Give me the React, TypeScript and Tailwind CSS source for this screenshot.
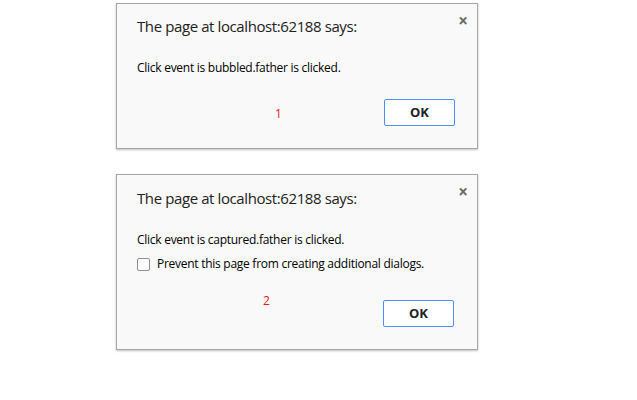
import React from 'react';

const font = { fontFamily: '"Segoe UI", "Open Sans", "Noto Sans", sans-serif' };

const Dialog = ({
  message,
  mark,
  withCheckbox,
}: {
  message: string;
  mark: string;
  withCheckbox?: boolean;
}) => {
  return (
    <div className="relative w-[362px] border border-[#a6a6a6] bg-[#f9f9f9] shadow-[0_1px_2px_rgba(0,0,0,0.25)]">
      <button className="absolute right-[9px] top-[8px] text-[17px] leading-none font-bold text-[#6b6b6b]">×</button>
      <div className={`pl-[20px] pr-[20px] pb-[22px] ${withCheckbox ? 'pt-[12px]' : 'pt-[11px]'}`}>
        <div className="text-[15px] leading-[22px] tracking-[-0.4px] text-[#222]">The page at localhost:62188 says:</div>
        <div className="mt-[23px] text-[12px] leading-[16px] tracking-[-0.27px] text-black">{message}</div>
        {withCheckbox && (
          <label className="mt-[8px] flex items-center gap-[7px] text-[12px] leading-[16px] tracking-[-0.27px] text-black">
            <span className="h-[13px] w-[13px] rounded-[2px] border border-[#8f8f8f] bg-white" />
            Prevent this page from creating additional dialogs.
          </label>
        )}
        <div className={`relative flex justify-end ${withCheckbox ? 'mt-[28px]' : 'mt-[23px]'}`}>
          <span className="absolute text-[12px] leading-none text-[#e02020]" style={{ left: mark === '1' ? 138 : 126, top: mark === '1' ? 9 : -5 }}>
            {mark}
          </span>
          <button className={`h-[27px] w-[71px] rounded-[2px] border border-[#4d90fe] bg-white text-[13px] font-bold text-[#222] ${withCheckbox ? 'mr-[3px]' : 'mr-[2px]'}`}>
            OK
          </button>
        </div>
      </div>
    </div>
  );
};

export default function App() {
  return (
    <div className="min-h-[400px] w-[637px] bg-white pl-[116px] pt-[3px]" style={font}>
      <Dialog message="Click event is bubbled.father is clicked." mark="1" />
      <div className="mt-[25px]">
        <Dialog message="Click event is captured.father is clicked." mark="2" withCheckbox />
      </div>
    </div>
  );
}
